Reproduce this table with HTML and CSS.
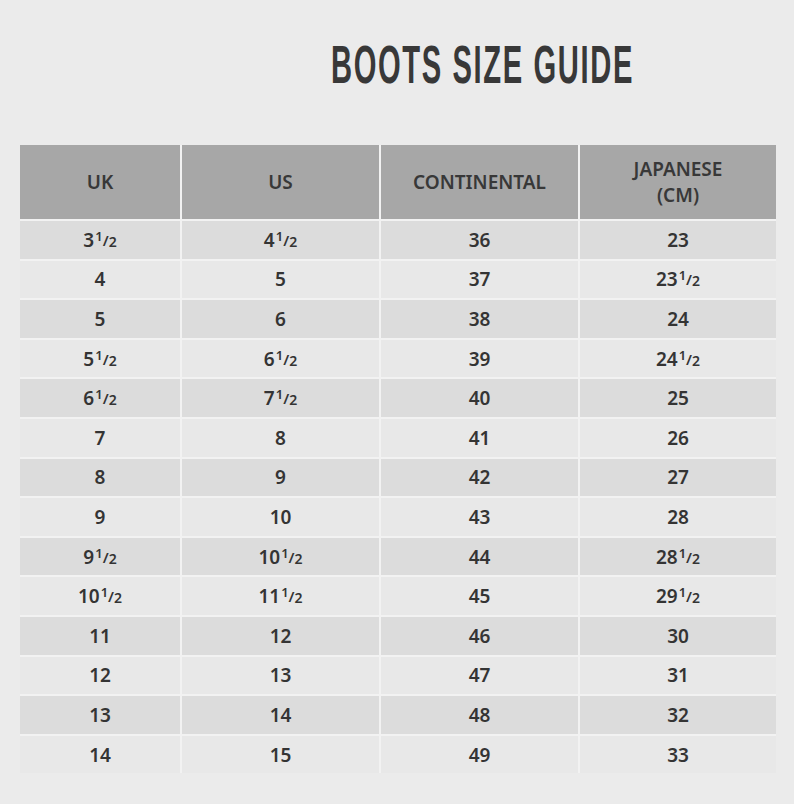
FILE: index.html
```html
<!DOCTYPE html>
<html>
<head>
<meta charset="utf-8">
<link rel="stylesheet" href="styles.css">
</head>
<body>
<div class="page">
  <h1 class="title"><span>BOOTS SIZE GUIDE</span></h1>
  <div class="table">
    <div class="cell head">UK</div>
    <div class="cell head">US</div>
    <div class="cell head">CONTINENTAL</div>
    <div class="cell head">JAPANESE<br>(CM)</div>

    <div class="cell dark">3<span class="fr"><sup>1</sup>/<sub>2</sub></span></div>
    <div class="cell dark">4<span class="fr"><sup>1</sup>/<sub>2</sub></span></div>
    <div class="cell dark">36</div>
    <div class="cell dark">23</div>

    <div class="cell">4</div>
    <div class="cell">5</div>
    <div class="cell">37</div>
    <div class="cell">23<span class="fr"><sup>1</sup>/<sub>2</sub></span></div>

    <div class="cell dark">5</div>
    <div class="cell dark">6</div>
    <div class="cell dark">38</div>
    <div class="cell dark">24</div>

    <div class="cell">5<span class="fr"><sup>1</sup>/<sub>2</sub></span></div>
    <div class="cell">6<span class="fr"><sup>1</sup>/<sub>2</sub></span></div>
    <div class="cell">39</div>
    <div class="cell">24<span class="fr"><sup>1</sup>/<sub>2</sub></span></div>

    <div class="cell dark">6<span class="fr"><sup>1</sup>/<sub>2</sub></span></div>
    <div class="cell dark">7<span class="fr"><sup>1</sup>/<sub>2</sub></span></div>
    <div class="cell dark">40</div>
    <div class="cell dark">25</div>

    <div class="cell">7</div>
    <div class="cell">8</div>
    <div class="cell">41</div>
    <div class="cell">26</div>

    <div class="cell dark">8</div>
    <div class="cell dark">9</div>
    <div class="cell dark">42</div>
    <div class="cell dark">27</div>

    <div class="cell">9</div>
    <div class="cell">10</div>
    <div class="cell">43</div>
    <div class="cell">28</div>

    <div class="cell dark">9<span class="fr"><sup>1</sup>/<sub>2</sub></span></div>
    <div class="cell dark">10<span class="fr"><sup>1</sup>/<sub>2</sub></span></div>
    <div class="cell dark">44</div>
    <div class="cell dark">28<span class="fr"><sup>1</sup>/<sub>2</sub></span></div>

    <div class="cell">10<span class="fr"><sup>1</sup>/<sub>2</sub></span></div>
    <div class="cell">11<span class="fr"><sup>1</sup>/<sub>2</sub></span></div>
    <div class="cell">45</div>
    <div class="cell">29<span class="fr"><sup>1</sup>/<sub>2</sub></span></div>

    <div class="cell dark">11</div>
    <div class="cell dark">12</div>
    <div class="cell dark">46</div>
    <div class="cell dark">30</div>

    <div class="cell">12</div>
    <div class="cell">13</div>
    <div class="cell">47</div>
    <div class="cell">31</div>

    <div class="cell dark">13</div>
    <div class="cell dark">14</div>
    <div class="cell dark">48</div>
    <div class="cell dark">32</div>

    <div class="cell">14</div>
    <div class="cell">15</div>
    <div class="cell">49</div>
    <div class="cell">33</div>
  </div>
</div>
</body>
</html>
```
FILE: styles.css
```css
html, body {
  margin: 0;
  padding: 0;
  background: #ebebeb;
}
.page {
  width: 794px;
  height: 804px;
  padding-top: 34px;
  box-sizing: border-box;
  overflow: hidden;
}
.title {
  margin: 0 0 0 331px;
  width: 330px;
  height: 111px;
  overflow: hidden;
  font-family: "Liberation Sans", Arial, sans-serif;
  font-weight: 700;
  font-size: 54px;
  line-height: 60px;
  letter-spacing: 3px;
  color: #383838;
  white-space: nowrap;
}
.title span {
  display: inline-block;
  transform: scaleX(0.54);
  transform-origin: left center;
}
.table {
  margin-left: 20px;
  width: 756px;
  display: grid;
  grid-template-columns: 160px 197px 197px 196px;
  grid-template-rows: 74px repeat(14, 37.6px);
  gap: 2px;
  background: #f2f2f2;
  font-family: "Noto Sans", "Open Sans", sans-serif;
  font-weight: 600;
  font-size: 19px;
  color: #343434;
}
.cell {
  display: flex;
  align-items: center;
  justify-content: center;
  text-align: center;
  background: #e8e8e8;
  line-height: 26px;
}
.cell.head {
  background: #a7a7a7;
  color: #383838;
  font-size: 19px;
  line-height: 26px;
}
.cell.dark {
  background: #dcdcdc;
}
.fr {
  font-size: 15px;
  margin-left: 1px;
}
.fr sup {
  font-size: 13px;
  vertical-align: 5px;
  line-height: 0;
}
.fr sub {
  font-size: 14px;
  vertical-align: -1px;
  line-height: 0;
}
```
